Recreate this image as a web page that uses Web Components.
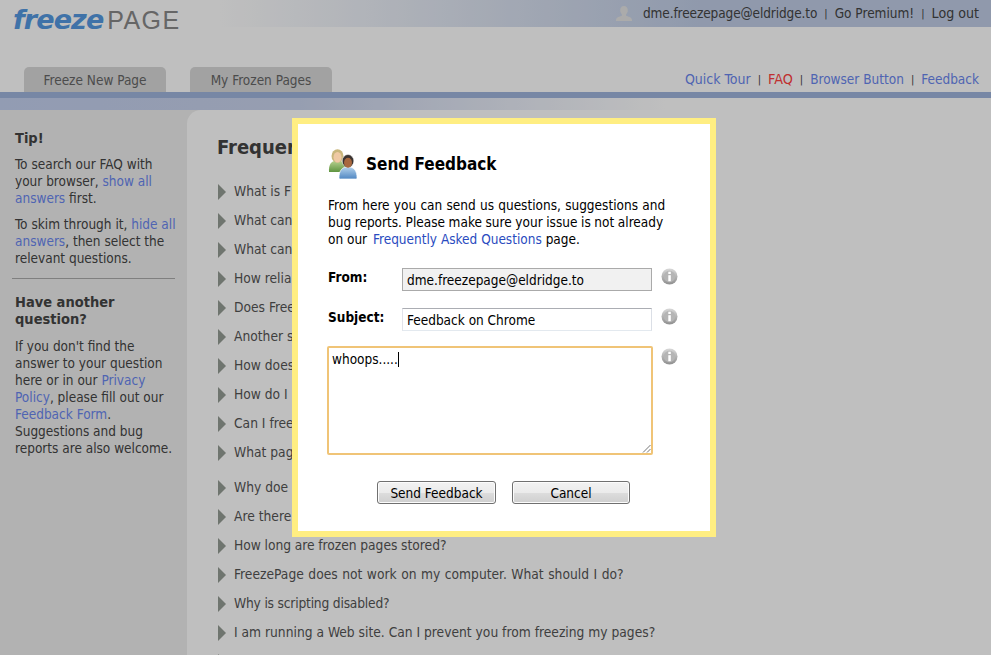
<!DOCTYPE html>
<html lang="en">
<head>
<meta charset="utf-8">
<title>FreezePage - Send Feedback</title>
<style>
  html, body { margin: 0; height: 100%; overflow: hidden; background: #fff; }
  body { font: 14px/17px "DejaVu Sans", sans-serif; font-stretch: condensed; color: #333; }
</style>
</head>
<body>
<fp-page>
  <fp-header></fp-header>
  <fp-sidebar slot="side"></fp-sidebar>
  <fp-faq slot="main"></fp-faq>
</fp-page>
<fp-feedback-dialog></fp-feedback-dialog>

<script>
const FONT = `font-family: "DejaVu Sans", sans-serif; font-stretch: condensed; font-size: 13.5px; line-height: 17px;`;
const LINK = "#6a86ee";

function shadow(el, html) {
  el.attachShadow({ mode: "open" }).innerHTML = html;
}

class FpPage extends HTMLElement {
  constructor() {
    super();
    shadow(this, `
      <style>
        :host { display: block; height: 655px; overflow: hidden; ${FONT} }
        .body { display: grid; grid-template-columns: 187px 1fr; background: #eee; height: 545px; }
      </style>
      <slot></slot>
      <div class="body">
        <slot name="side"></slot>
        <slot name="main"></slot>
      </div>
    `);
  }
}

class FpHeader extends HTMLElement {
  constructor() {
    super();
    shadow(this, `
      <style>
        :host { display: block; height: 110px; }
        a { text-decoration: none; color: ${LINK}; }
        .top { height: 27px; display: flex; justify-content: flex-end; align-items: center; gap: 7px;
          padding-right: 12px; color: #444;
          background: linear-gradient(to right, #fff 0, #fff 220px, #c0cde6 700px, #c0cde6 100%); }
        .top a { color: #444; }
        .top a.out { font-size: 14.1px; }
        .top svg { margin-right: 3px; }
        .mail { letter-spacing: -.1px; }
        .logo { position: absolute; left: 13px; top: 2px; display: flex; align-items: baseline; gap: 4px; line-height: 36px; white-space: nowrap; }
        .logo b { font: italic bold 27px/36px "DejaVu Sans", sans-serif; color: #5599e0; letter-spacing: -.9px; }
        .logo span { font: 25px/36px "Liberation Sans", sans-serif; color: #888; letter-spacing: 1.4px; }
        .nav { height: 65px; box-sizing: border-box; display: flex; justify-content: space-between; align-items: flex-end; padding: 0 12px 0 24px; }
        .tabs { display: flex; gap: 24px; }
        .tab { width: 142px; height: 25px; line-height: 26px; text-align: center; background: #d9d9d9; border-radius: 5px 5px 0 0; color: #666; }
        .links { display: flex; gap: 7px; padding-bottom: 4px; }
        .links a:first-child { font-size: 14px; }
        .sep { color: #444; font-size: 11px; }
        .red { color: #ff4040; font-size: 14.3px; }
        .rule { height: 6px; background: #9fb4dc; }
        .band { height: 12px; background: linear-gradient(to right, #c3d0ef 0, #c9d3ec 300px, #fff 665px); }
      </style>
      <div class="logo"><b>freeze</b><span>PAGE</span></div>
      <div class="top">
        <svg width="18" height="18" viewBox="0 0 18 18"><path d="M9 1c2.4 0 3.8 1.800 3.800 4.200 0 1.700-.7 3.200-1.700 4.100v1.400c1.700.7 5.900 1.300 5.900 4.300v1H1v-1c0-3 4.200-3.600 5.900-4.300V9.300C5.900 8.400 5.200 6.900 5.200 5.200 5.200 2.800 6.600 1 9 1z" fill="#e4e4e4"/></svg>
        <span class="mail">dme.freezepage@eldridge.to</span><span class="sep">|</span>
        <a>Go Premium!</a><span class="sep">|</span><a class="out">Log out</a>
      </div>
      <div class="nav">
        <div class="tabs"><div class="tab">Freeze New Page</div><div class="tab">My Frozen Pages</div></div>
        <div class="links">
          <a>Quick Tour</a><span class="sep">|</span><a class="red">FAQ</a><span class="sep">|</span>
          <a>Browser Button</a><span class="sep">|</span><a>Feedback</a>
        </div>
      </div>
      <div class="rule"></div>
      <div class="band"></div>
    `);
  }
}

class FpSidebar extends HTMLElement {
  constructor() {
    super();
    shadow(this, `
      <style>
        :host { display: block; padding: 20px 12px 0; }
        a { color: ${LINK}; text-decoration: none; }
        h3 { margin: 0 3px; font-size: 14.5px; font-weight: bold; color: #444; }
        p { margin: 9px 3px 0; white-space: nowrap; color: #444; }
        h3 + p.last { margin-top: 10px; }
        hr { border: 0; height: 1px; background: #aaa; margin: 11px 0 15px; }
      </style>
      <h3>Tip!</h3>
      <p>To search our FAQ with<br>your browser, <a>show all</a><br><a>answers</a> first.</p>
      <p>To skim through it, <a>hide all</a><br><a>answers</a>, then select the<br>relevant questions.</p>
      <hr>
      <h3>Have another<br>question?</h3>
      <p class="last">If you don't find the<br>answer to your question<br>here or in our <a>Privacy</a><br><a>Policy</a>, please fill out our<br><a>Feedback Form</a>.<br>Suggestions and bug<br>reports are also welcome.</p>
    `);
  }
}

class FpFaq extends HTMLElement {
  constructor() {
    super();
    // the dialog covers these rows, only what shows beside it is written
    const rows = ["What is F", "What can", "What can", "How reliab", "Does Free", "Another s", "How does", "How do I", "Can I free", "What pag"];
    const rows2 = [
      ["Why doe"], ["Are there"],
      ["How long are frozen pages stored?", "word-spacing:-.3px"],
      ["FreezePage does not work on my computer. What should I do?", "word-spacing:.6px"],
      ["Why is scripting disabled?", "letter-spacing:-.2px"],
      ["I am running a Web site. Can I prevent you from freezing my pages?"],
      [""]
    ];
    const li = ([t, s = ""]) => `<li><i></i><span style="${s}">${t}</span></li>`;
    shadow(this, `
      <style>
        :host { display: block; background: #fff; border-radius: 14px 0 0 0; padding: 24px 0 0 31px; }
        h2 { margin: 0 0 23px -1px; font-size: 20px; line-height: 26px; font-weight: bold; color: #444; }
        ul { list-style: none; margin: 0; padding: 0; display: flex; flex-direction: column; gap: 12px; font-size: 13.7px; }
        ul + ul { margin-top: 18px; }
        li { display: flex; align-items: center; gap: 8px; height: 17px; color: #555; white-space: nowrap; }
        i { width: 0; height: 0; border-left: 8px solid #959c94; border-top: 8px solid transparent; border-bottom: 8px solid transparent; }
      </style>
      <h2>Frequen</h2>
      <ul>${rows.map(t => li([t])).join("")}</ul>
      <ul>${rows2.map(li).join("")}</ul>
    `);
  }
}

const INFO = `<svg width="17" height="17" viewBox="0 0 17 17">
  <defs><linearGradient id="g" x1="0" y1="0" x2="0" y2="1"><stop offset="0" stop-color="#d8d8d8"/><stop offset="1" stop-color="#8f8f8f"/></linearGradient></defs>
  <circle cx="8.500" cy="8.500" r="8" fill="url(#g)"/><circle cx="8.500" cy="8.500" r="5.700" fill="#b5b5b5"/>
  <rect x="7.300" y="7.200" width="2.500" height="6" fill="#fff"/><rect x="7.300" y="3.700" width="2.500" height="2.300" fill="#fff"/></svg>`;

class FpFeedbackDialog extends HTMLElement {
  constructor() {
    super();
    shadow(this, `
      <style>
        :host { position: fixed; inset: 0; display: block; background: rgba(0,0,0,.25); ${FONT} color: #000; }
        a { color: #2a4bc0; text-decoration: none; }
        .box { position: absolute; left: 292px; top: 118px; height: 407px; border: 6px solid #ffee82; background: #fff;
          padding: 0 30px; box-sizing: content-box; width: 352px; }
        .title { display: flex; align-items: center; gap: 6px; height: 32px; margin-top: 24px; font-size: 17px; font-weight: bold; }
        .intro { margin: 17px 0 0; white-space: nowrap; }
        .row { display: grid; grid-template-columns: 65px 250px 17px; column-gap: 9px; margin-top: 17px; font-weight: bold; align-items: start; }
        .row.first { margin-top: 20px; }
        label { padding-top: 1px; }
        .field { box-sizing: border-box; height: 23px; border: 1px solid #abadb3; border-bottom-color: #e3e9ef; border-left-color: #e2e3ea; border-right-color: #dbdfe6;
          font-weight: normal; line-height: 22px; padding-left: 4px; }
        .ro { background: #f1f1f1; border-color: #aaa; }
        .area { display: grid; grid-template-columns: 326px 17px; column-gap: 8px; margin: 15px 0 0 -1px; }
        .area svg { margin-top: 2px; }
        .text { box-sizing: border-box; height: 109px; border: 2px solid #f0c477; border-radius: 2px; padding: 3px 3px; position: relative; }
        .caret { display: inline-block; width: 1px; height: 15px; background: #000; vertical-align: -3px; }
        .text .grip { position: absolute; right: 0; bottom: 0; margin: 0; }
        .buttons { display: flex; justify-content: center; gap: 16px; margin: 26px 1px 0 0; }
        .btn { box-sizing: border-box; width: 119px; height: 23px; border: 1px solid #707070; border-radius: 3px; text-align: center; line-height: 22px;
          background: linear-gradient(#f2f2f2 0, #ebebeb 50%, #dddddd 50%, #cfcfcf 100%); box-shadow: inset 0 0 0 1px #fcfcfc; }
        .btn + .btn { width: 118px; }
      </style>
      <div class="box">
        <div class="title">
          <svg width="32" height="32" viewBox="0 0 32 32">
            <defs>
              <linearGradient id="gr" x1="0" y1="0" x2="0" y2="1"><stop offset="0" stop-color="#b6d08e"/><stop offset="1" stop-color="#5f9440"/></linearGradient>
              <linearGradient id="bl" x1="0" y1="0" x2="0" y2="1"><stop offset="0" stop-color="#b4d2ec"/><stop offset="1" stop-color="#4f86c2"/></linearGradient>
            </defs>
            <path d="M1 24c-.5-7 2-10 5-11h7c3 1 5 4 4 11z" fill="url(#gr)"/>
            <ellipse cx="9.500" cy="8" rx="6" ry="6.800" fill="#c9b67c"/><ellipse cx="9.500" cy="9.300" rx="4" ry="5.200" fill="#efc9a4"/>
            <path d="M12.500 31c-1 0-1.500-.5-1.500-1.500 0-6 2.500-9.500 6.500-10.500h5c4 1 6.500 4.500 6.500 10.500 0 1-.5 1.500-1.500 1.500z" fill="url(#bl)" stroke="#fff" stroke-width=".7"/>
            <ellipse cx="20" cy="13" rx="5.800" ry="6.500" fill="#3b3431" stroke="#fff" stroke-width=".5"/><ellipse cx="20" cy="14.800" rx="4" ry="5" fill="#a8683f"/>
          </svg>
          <span>Send Feedback</span>
        </div>
        <div class="intro">
          <div style="word-spacing:.4px">From here you can send us questions, suggestions and</div>
          <div style="word-spacing:-.25px">bug reports. Please make sure your issue is not already</div>
          <div><span>on our</span> <a style="margin-left:2px">Frequently Asked Questions</a> <span>page.</span></div>
        </div>
        <div class="row first"><label>From:</label><div class="field ro">dme.freezepage@eldridge.to</div>${INFO}</div>
        <div class="row"><label>Subject:</label><div class="field">Feedback on Chrome</div>${INFO}</div>
        <div class="area">
          <div class="text">whoops.....<span class="caret"></span>
            <svg class="grip" width="9" height="9" viewBox="0 0 9 9"><path d="M8.500 1 1 8.500M8.500 5 5 8.500" stroke="#777" fill="none"/></svg>
          </div>
          ${INFO}
        </div>
        <div class="buttons"><div class="btn">Send Feedback</div><div class="btn">Cancel</div></div>
      </div>
    `);
  }
}

customElements.define("fp-page", FpPage);
customElements.define("fp-header", FpHeader);
customElements.define("fp-sidebar", FpSidebar);
customElements.define("fp-faq", FpFaq);
customElements.define("fp-feedback-dialog", FpFeedbackDialog);
</script>
</body>
</html>
